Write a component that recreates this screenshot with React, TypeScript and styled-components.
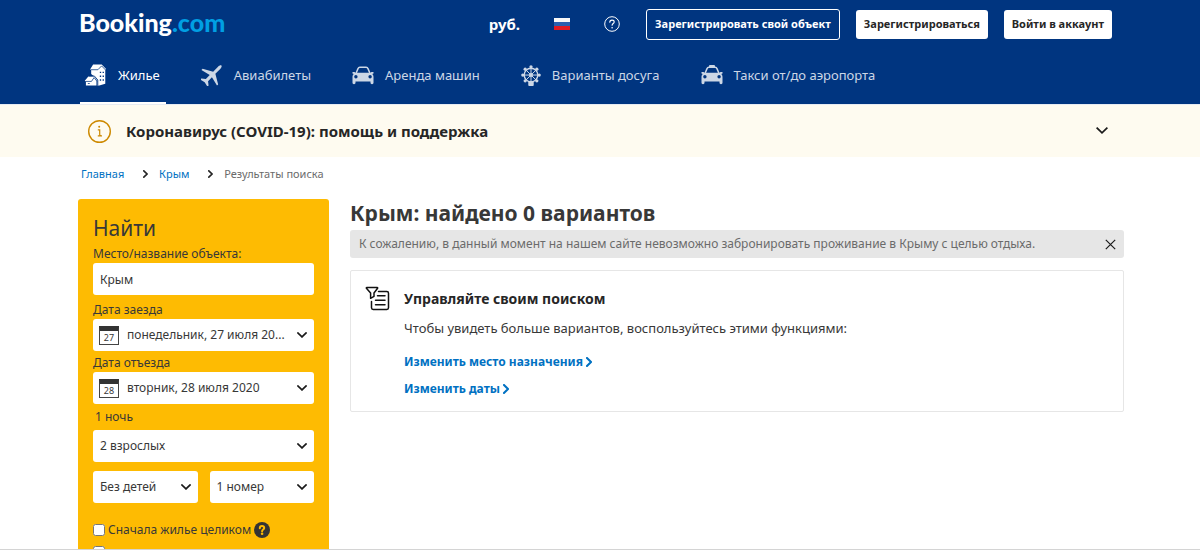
import React from 'react';
import styled, { createGlobalStyle } from 'styled-components';

const GlobalStyle = createGlobalStyle`
  * { box-sizing: border-box; }
  body {
    margin: 0;
    background: #fff;
    color: #383838;
    font-family: "Noto Sans", "Open Sans", sans-serif;
    font-size: 13px;
    line-height: 18px;
  }
  button, input, select { font: inherit; color: inherit; margin: 0; }
  a { text-decoration: none; }
  h1, h2, p, ol { margin: 0; padding: 0; }
  svg { display: block; flex: none; }
`;

const Page = styled.div`
  height: 100vh;
  overflow: hidden;
  border-bottom: 1px solid #d4d4d4;
`;

const Header = styled.header`
  background: #003580;
  color: #fff;
  padding: 0 88px 0 79px;
`;

const TopBar = styled.div`
  display: flex;
  align-items: center;
  height: 48px;
`;

const Logo = styled.a`
  color: #fff;
  font-family: Lato, "Open Sans", sans-serif;
  font-size: 25px;
  font-weight: 900;
  line-height: 32px;
  margin-right: auto;
  padding-bottom: 4px;
`;

const LogoAccent = styled.span`
  color: #009fe3;
`;

const BarButton = styled.button`
  display: flex;
  align-items: center;
  background: none;
  border: 0;
  padding: 0;
  margin-right: 34px;
  font-size: 15px;
  font-weight: 700;
`;

const HelpButton = styled(BarButton)`
  margin-right: 26px;
`;

const Actions = styled.div`
  display: flex;
  align-items: center;
  gap: 16px;
`;

const Action = styled.button<{ $outline?: boolean }>`
  height: ${p => (p.$outline ? 31 : 29)}px;
  padding: 0 8px;
  border-radius: 3px;
  border: ${p => (p.$outline ? '1px solid #fff' : '0')};
  background: ${p => (p.$outline ? 'transparent' : '#fff')};
  color: ${p => (p.$outline ? '#fff' : '#262626')};
  font-size: 11px;
  font-weight: 700;
  white-space: nowrap;
`;

const Nav = styled.nav`
  display: flex;
  gap: 31px;
  height: 56px;
  padding-left: 1px;
`;

const NavItem = styled.a<{ $active?: boolean }>`
  display: flex;
  align-items: center;
  gap: 11px;
  height: 56px;
  padding: 0 6px 0 4px;
  color: ${p => (p.$active ? '#fff' : '#ccd7e6')};
  border-bottom: 2px solid ${p => (p.$active ? '#fff' : 'transparent')};
  white-space: nowrap;
`;

const Notice = styled.section`
  background: #fefbf0;
  border-top: 1px solid #e6ebf2;
  height: 53px;
  display: flex;
  align-items: center;
  gap: 15px;
  padding: 0 92px 0 88px;
`;

const NoticeTitle = styled.h2`
  flex: 1;
  font-size: 15px;
  font-weight: 700;
  color: #262626;
`;

const IconButton = styled.button`
  border: 0;
  background: none;
  padding: 0;
  color: #1a1a1a;
`;

const Crumbs = styled.ol`
  display: flex;
  align-items: center;
  list-style: none;
  height: 34px;
  padding: 0 81px;
  font-size: 11px;
  color: #6b6b6b;
`;

const Crumb = styled.li`
  display: flex;
  align-items: center;
  a { color: #0071c2; }
  svg { margin: 0 11px 0 19px; color: #262626; }
`;

const Columns = styled.div`
  display: flex;
  align-items: flex-start;
  gap: 21px;
  padding: 8px 76px 0 78px;
`;

const Search = styled.form`
  width: 251px;
  flex: none;
  background: #febb02;
  border-radius: 3px;
  padding: 15px 15px 24px;
  display: flex;
  flex-direction: column;
`;

const SearchTitle = styled.h2`
  font-size: 21px;
  font-weight: 400;
  line-height: 29px;
  padding-bottom: 2px;
`;

const FieldLabel = styled.label<{ $gap?: number }>`
  font-size: 12px;
  margin-top: ${p => p.$gap ?? 0}px;
`;

const Nights = styled.p`
  font-size: 12px;
  margin: 4px 2px;
`;

const TextField = styled.input`
  height: 32px;
  width: 100%;
  border: 0;
  border-radius: 3px;
  background: #fff;
  padding: 0 7px;
  font-size: 12px;
`;

const Picker = styled.div`
  display: grid;
  align-items: center;
  flex: 1;
  min-width: 0;
  > * { grid-area: 1 / 1; }
  > svg { pointer-events: none; justify-self: end; margin-right: 7px; color: #1a1a1a; }
`;

const Select = styled.select<{ $dated?: boolean }>`
  appearance: none;
  width: 100%;
  height: 32px;
  border: 0;
  border-radius: 3px;
  background: #fff;
  padding: 0 24px 0 ${p => (p.$dated ? 34 : 7)}px;
  font-size: 12px;
`;

const DayBadge = styled.span`
  pointer-events: none;
  justify-self: start;
  margin-left: 6px;
  width: 20px;
  height: 19px;
  border: 1px solid #444;
  border-top: 5px solid #333;
  font-size: 9px;
  line-height: 14px;
  text-align: center;
`;

const PickerRow = styled.div`
  display: flex;
  gap: 12px;
  margin: 9px 0 18px;
`;

const CheckRow = styled.div`
  display: flex;
  align-items: center;
  gap: 3px;
  height: 18px;
  margin-bottom: 4px;
  font-size: 12px;
`;

const Checkbox = styled.input`
  width: 12px;
  height: 12px;
`;

const Results = styled.main`
  flex: 1;
  min-width: 0;
`;

const ResultsTitle = styled.h1`
  font-size: 21px;
  line-height: 28px;
  margin-bottom: 3px;
  font-weight: 700;
`;

const Alert = styled.div`
  display: flex;
  align-items: center;
  justify-content: space-between;
  height: 28px;
  margin-bottom: 12px;
  padding: 0 8px 0 9px;
  background: #e6e6e6;
  border-radius: 3px;
  color: #6b6b6b;
  font-size: 12px;
`;

const Card = styled.section`
  display: flex;
  gap: 14px;
  border: 1px solid #e6e6e6;
  border-radius: 2px;
  padding: 15px 14px 9px;
`;

const CardBody = styled.div`
  display: flex;
  flex-direction: column;
  align-items: flex-start;
  padding-top: 4px;
`;

const CardTitle = styled.h2`
  font-size: 14px;
  font-weight: 700;
  color: #262626;
`;

const CardText = styled.p`
  font-size: 13px;
  margin: 11px 0;
`;

const CardLink = styled.a`
  display: flex;
  align-items: center;
  gap: 3px;
  height: 27px;
  color: #0071c2;
  font-size: 12px;
  font-weight: 700;
`;

const Chevron = ({ down, size = 10, weight = 2 }: { down?: boolean; size?: number; weight?: number }) => (
  <svg width={down ? size : size * 0.6} height={down ? size * 0.6 : size} viewBox={down ? '0 0 10 6' : '0 0 6 10'} fill="none" stroke="currentColor" strokeWidth={weight}>
    <path d={down ? 'M1 1 5 4.900 9 1' : 'M1 1 5 5 1 9'} strokeLinecap="square" />
  </svg>
);

const HouseIcon = () => (
  <svg width="23" height="24" viewBox="0 0 24 24" fill="currentColor">
    <path d="M9.500 1h9l4.500 4.800-.8.9v14.300L16 23h-2v-6.500L7.500 11V7L6.500 6z" />
    <path d="M4.500 13.500h6l3.500 4-1 .8V23H2v-4.300L.8 18z" />
    <path d="M7.200 6.500h7.300l3.900-4 4 4.200" fill="none" stroke="#003580" strokeWidth=".8" />
    <path d="M1.600 18.700h6.200l2.700-4 3 3.800M5 13h5.800l3.600 4.300v5.500" fill="none" stroke="#003580" strokeWidth=".8" />
    <path d="M16.500 8.500h1.400V10h-1.400zM19.400 8.500h1.400V10h-1.400zM16.500 12.500h1.400V14h-1.400zM19.400 12.500h1.400V14h-1.400zM16.500 16.500h1.400V18h-1.400zM19.400 16.500h1.400V18h-1.400zM4 20.500h2v1H4z" fill="#003580" />
  </svg>
);

const PlaneIcon = () => (
  <svg width="22" height="22" viewBox="0 0 24 24" fill="currentColor">
    <path transform="rotate(45 12 12)" d="M24 16.300v-1.800l-10.300-6V1C13.700-1 13-2.500 12-2.500S10.300-1 10.300 1v7.500L0 14.500v1.800l10.300-2.500v6L6.500 22.800v1.700l5.500-1.200 5.500 1.200v-1.700l-3.800-3v-6z" />
  </svg>
);

const CarIcon = ({ taxi }: { taxi?: boolean }) => (
  <svg width="22" height="20" viewBox="0 0 22 20">
    {taxi && <path d="M8 1.200C8 .5 8.500 0 9.200 0h3.600c.7 0 1.200.5 1.200 1.200V2H8z" fill="currentColor" />}
    <path d="M4 8.500 5.900 3.900C6.300 2.900 6.900 2.300 7.900 2.300h6.200c1 0 1.600.6 2 1.600L18 8.500" fill="none" stroke="currentColor" strokeWidth="1.500" />
    <path d="M.5 7h2l.9.8h15.200l.9-.8h2v1.400l-1.300.6c.8.800 1.300 1.700 1.300 2.900v5.900c0 .9-.6 1.400-1.500 1.400s-1.500-.5-1.500-1.400v-1.400h-15v1.400c0 .9-.6 1.400-1.500 1.400S.5 18.700.5 17.800v-5.900C.5 10.700 1 9.800 1.800 9L.5 8.400z" fill="currentColor" />
    <circle cx="3.900" cy="11.800" r="1.700" fill="#003580" />
    <circle cx="18.100" cy="11.800" r="1.700" fill="#003580" />
  </svg>
);

const WheelIcon = () => (
  <svg width="20" height="21" viewBox="0 0 22 23" fill="none" stroke="currentColor">
    <circle cx="11" cy="11" r="7.500" strokeWidth="1.500" />
    <path d="M11 3v16M3 11h16M5.500 5.500l11 11M16.500 5.500l-11 11" strokeWidth="1.100" />
    <g fill="currentColor" stroke="none">
      <circle cx="11" cy="11" r="2.200" />
      <circle cx="11" cy="2" r="1.800" />
      <circle cx="2" cy="11" r="1.800" />
      <circle cx="20" cy="11" r="1.800" />
      <circle cx="4.600" cy="4.600" r="1.800" />
      <circle cx="17.400" cy="4.600" r="1.800" />
      <circle cx="4.600" cy="17.400" r="1.800" />
      <circle cx="17.400" cy="17.400" r="1.800" />
      <path d="M8 17.500h6V22a1 1 0 0 1-1 1H9a1 1 0 0 1-1-1z" />
    </g>
  </svg>
);

const FlagIcon = () => (
  <svg width="16" height="12" viewBox="0 0 16 12">
    <path d="M0 0h16v4H0z" fill="#f7f7f7" />
    <path d="M0 4h16v4H0z" fill="#2a5fae" />
    <path d="M0 8h16v4H0z" fill="#e01b22" />
  </svg>
);

const HelpIcon = ({ solid }: { solid?: boolean }) => (
  <svg width="16" height="16" viewBox="0 0 16 16" fill="none">
    <circle cx="8" cy="8" r={solid ? 8 : 7.3} fill={solid ? '#333' : 'none'} stroke={solid ? 'none' : '#fff'} />
    <path
      d="M5.800 6.200c0-1.300.9-2.100 2.200-2.100s2.200.8 2.200 1.900c0 1.500-2.100 1.500-2.100 3.200"
      stroke={solid ? '#febb02' : '#fff'}
      strokeWidth={solid ? 2 : 1.1}
      strokeLinecap="round"
    />
    <circle cx="8.100" cy="11.700" r={solid ? 1.3 : 0.8} fill={solid ? '#febb02' : '#fff'} />
  </svg>
);

const InfoIcon = () => (
  <svg width="23" height="23" viewBox="0 0 23 23" fill="none" stroke="#cd8900">
    <circle cx="11.500" cy="11.500" r="10.800" strokeWidth="1.400" />
    <path d="M9.800 9.800h1.900v4.700c0 .9.500 1.400 1.500 1.400h.8M9.800 15.900h2.700" strokeWidth="1.200" />
    <circle cx="11.200" cy="6.700" r="1" fill="#cd8900" stroke="none" />
  </svg>
);

const CloseIcon = () => (
  <svg width="11" height="11" viewBox="0 0 11 11" stroke="currentColor" strokeWidth="1.200">
    <path d="M.8.8l9.400 9.400M10.200.8.8 10.200" />
  </svg>
);

const FilterIcon = () => (
  <svg width="25" height="25" viewBox="0 0 25 25" fill="none" stroke="#111" strokeWidth="1.500" strokeLinecap="round" strokeLinejoin="round">
    <path d="M1.800 1.500h10.400c.5 0 .6.5.4.8L9 7v3.300l-3.400 2V7L1.400 2.300c-.2-.3-.1-.8.4-.8z" />
    <path d="M13.500 5.500h8.300a1.700 1.700 0 0 1 1.700 1.700v14.600a1.700 1.700 0 0 1-1.700 1.700H8.200a1.700 1.700 0 0 1-1.700-1.700V15.500" />
    <path d="M12.500 9.800h7.500M10.500 14.300H20M10.500 18.800H20" />
  </svg>
);

const navItems = [
  { label: 'Жилье', icon: <HouseIcon />, active: true },
  { label: 'Авиабилеты', icon: <PlaneIcon /> },
  { label: 'Аренда машин', icon: <CarIcon /> },
  { label: 'Варианты досуга', icon: <WheelIcon /> },
  { label: 'Такси от/до аэропорта', icon: <CarIcon taxi /> },
];

function Dropdown({ id, value, day, label }: { id: string; value: string; day?: number; label?: string }) {
  return (
    <Picker>
      <Select id={id} aria-label={label} $dated={day !== undefined}>
        <option>{value}</option>
      </Select>
      {day !== undefined && <DayBadge>{day}</DayBadge>}
      <Chevron down weight={1.7} />
    </Picker>
  );
}

export default function App() {
  return (
    <Page>
      <GlobalStyle />
      <Header>
        <TopBar>
          <Logo href="#">Booking<LogoAccent>.com</LogoAccent></Logo>
          <BarButton>руб.</BarButton>
          <BarButton aria-label="Язык"><FlagIcon /></BarButton>
          <HelpButton aria-label="Помощь"><HelpIcon /></HelpButton>
          <Actions>
            <Action $outline>Зарегистрировать свой объект</Action>
            <Action>Зарегистрироваться</Action>
            <Action>Войти в аккаунт</Action>
          </Actions>
        </TopBar>
        <Nav>
          {navItems.map(item => (
            <NavItem key={item.label} href="#" $active={item.active}>
              {item.icon}
              {item.label}
            </NavItem>
          ))}
        </Nav>
      </Header>

      <Notice>
        <InfoIcon />
        <NoticeTitle>Коронавирус (COVID-19): помощь и поддержка</NoticeTitle>
        <IconButton aria-label="Развернуть"><Chevron down size={12} weight={1.4} /></IconButton>
      </Notice>

      <nav>
        <Crumbs>
          <Crumb><a href="#">Главная</a><Chevron size={8} /></Crumb>
          <Crumb><a href="#">Крым</a><Chevron size={8} /></Crumb>
          <Crumb>Результаты поиска</Crumb>
        </Crumbs>
      </nav>

      <Columns>
        <Search>
          <SearchTitle>Найти</SearchTitle>
          <FieldLabel htmlFor="place">Место/название объекта:</FieldLabel>
          <TextField id="place" defaultValue="Крым" />
          <FieldLabel htmlFor="checkin" $gap={6}>Дата заезда</FieldLabel>
          <Dropdown id="checkin" value="понедельник, 27 июля 20..." day={27} />
          <FieldLabel htmlFor="checkout" $gap={3}>Дата отъезда</FieldLabel>
          <Dropdown id="checkout" value="вторник, 28 июля 2020" day={28} />
          <Nights>1 ночь</Nights>
          <Dropdown id="adults" label="Взрослые" value="2 взрослых" />
          <PickerRow>
            <Dropdown id="children" label="Дети" value="Без детей" />
            <Dropdown id="rooms" label="Номера" value="1 номер" />
          </PickerRow>
          <CheckRow>
            <Checkbox type="checkbox" id="entire" />
            <label htmlFor="entire">Сначала жилье целиком</label>
            <HelpIcon solid />
          </CheckRow>
          <CheckRow>
            <Checkbox type="checkbox" aria-label="По работе" />
          </CheckRow>
        </Search>

        <Results>
          <ResultsTitle>Крым: найдено 0 вариантов</ResultsTitle>
          <Alert>
            К сожалению, в данный момент на нашем сайте невозможно забронировать проживание в Крыму с целью отдыха.
            <IconButton aria-label="Закрыть"><CloseIcon /></IconButton>
          </Alert>
          <Card>
            <FilterIcon />
            <CardBody>
              <CardTitle>Управляйте своим поиском</CardTitle>
              <CardText>Чтобы увидеть больше вариантов, воспользуйтесь этими функциями:</CardText>
              <CardLink href="#">Изменить место назначения<Chevron /></CardLink>
              <CardLink href="#">Изменить даты<Chevron /></CardLink>
            </CardBody>
          </Card>
        </Results>
      </Columns>
    </Page>
  );
}
